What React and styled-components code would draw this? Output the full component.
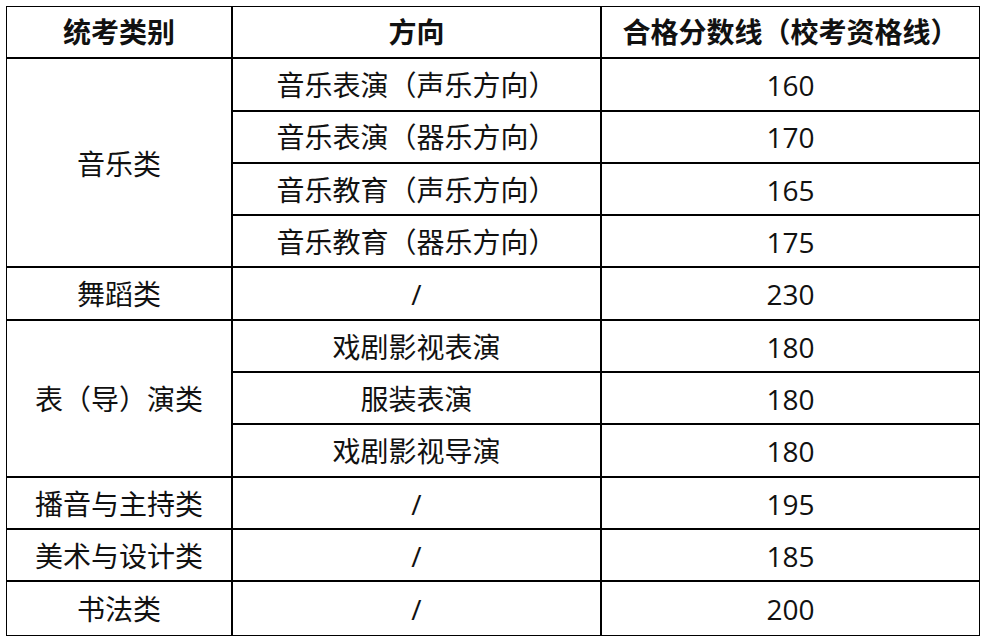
import React from 'react'
import styled, { createGlobalStyle } from 'styled-components'

const GlobalStyle = createGlobalStyle`
  html, body {
    margin: 0;
    padding: 0;
    background: #fff;
  }
`

const Page = styled.div`
  padding: 6px 0 0 6px;
  font-family: "Open Sans", "Noto Sans CJK SC", sans-serif;
  color: #111;
`

const Table = styled.table`
  border-collapse: separate;
  border-spacing: 0;
  table-layout: fixed;
  width: 974px;
  border: 1px solid #000;
`

const Row = styled.tr`
  height: 52.3px;
`

const HeadCell = styled.th`
  box-sizing: border-box;
  padding: 2px 0 0;
  font-size: 28px;
  line-height: 1.2;
  font-weight: 700;
  text-align: center;
  vertical-align: middle;
  border-right: ${p => (p.$last ? '0' : '2px solid #000')};
  border-bottom: 2px solid #000;
  white-space: nowrap;
`

const Cell = styled.td`
  box-sizing: border-box;
  padding: 3px 0 0;
  font-size: 28px;
  line-height: 1.2;
  font-weight: 400;
  text-align: center;
  vertical-align: middle;
  border-right: ${p => (p.$last ? '0' : '2px solid #000')};
  border-bottom: ${p => (p.$bottom ? '0' : '2px solid #000')};
  white-space: nowrap;
`

const groups = [
  {
    name: '音乐类',
    items: [
      ['音乐表演（声乐方向）', '160'],
      ['音乐表演（器乐方向）', '170'],
      ['音乐教育（声乐方向）', '165'],
      ['音乐教育（器乐方向）', '175'],
    ],
  },
  { name: '舞蹈类', items: [['/', '230']] },
  {
    name: '表（导）演类',
    items: [
      ['戏剧影视表演', '180'],
      ['服装表演', '180'],
      ['戏剧影视导演', '180'],
    ],
  },
  { name: '播音与主持类', items: [['/', '195']] },
  { name: '美术与设计类', items: [['/', '185']] },
  { name: '书法类', items: [['/', '200']] },
]

const App = () => {
  return (
    <Page>
      <GlobalStyle />
      <Table>
        <colgroup>
          <col style={{ width: 226 }} />
          <col style={{ width: 369 }} />
          <col style={{ width: 377 }} />
        </colgroup>
        <thead>
          <Row>
            <HeadCell>统考类别</HeadCell>
            <HeadCell>方向</HeadCell>
            <HeadCell $last>合格分数线（校考资格线）</HeadCell>
          </Row>
        </thead>
        <tbody>
          {groups.map((g, gi) => {
            const lastGroup = gi === groups.length - 1
            return g.items.map((item, i) => {
              const bottom = lastGroup && i === g.items.length - 1
              return (
                <Row key={g.name + i}>
                  {i === 0 && (
                    <Cell rowSpan={g.items.length} $bottom={lastGroup}>
                      {g.name}
                    </Cell>
                  )}
                  <Cell $bottom={bottom}>{item[0]}</Cell>
                  <Cell $last $bottom={bottom}>{item[1]}</Cell>
                </Row>
              )
            })
          })}
        </tbody>
      </Table>
    </Page>
  )
}

export default App
